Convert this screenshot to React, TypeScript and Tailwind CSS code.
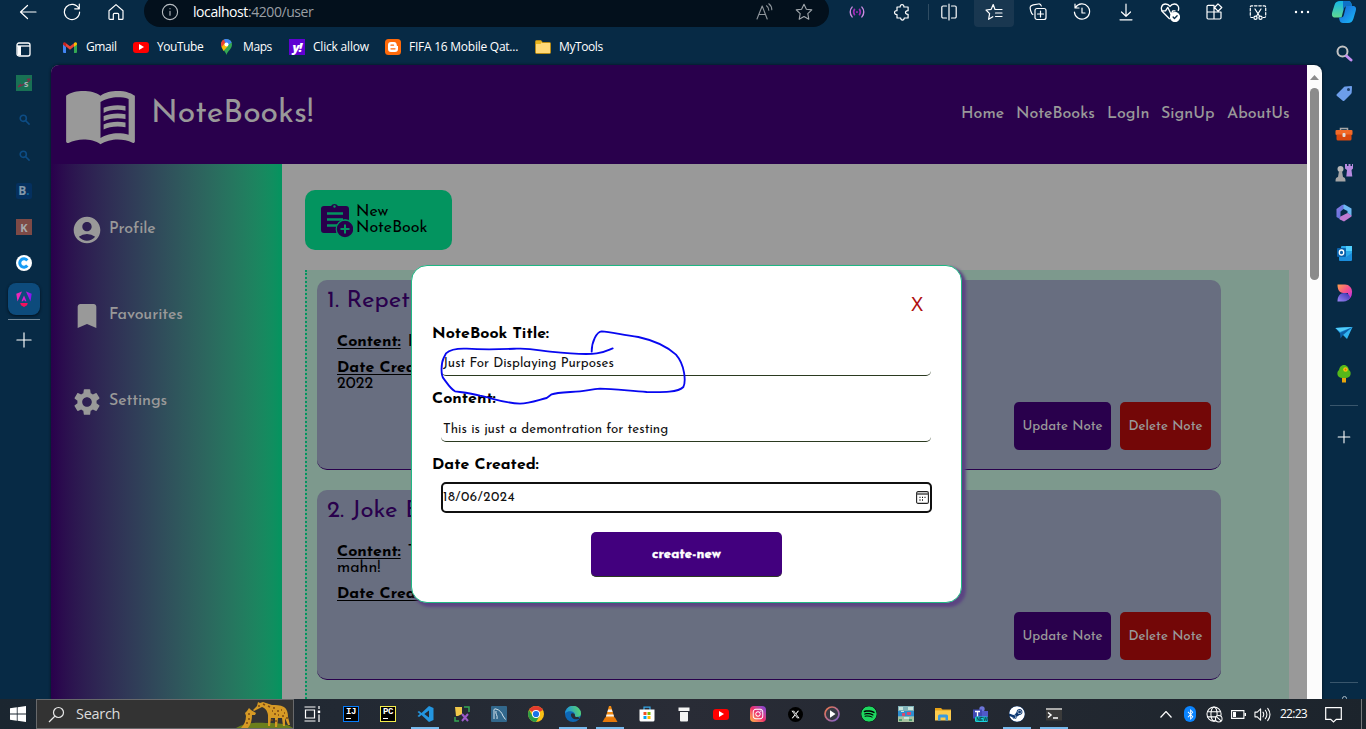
import type { ReactNode } from 'react';
import {
  MdMenuBook,
  MdAccountCircle,
  MdBookmark,
  MdSettings,
} from 'react-icons/md';
import { FaYoutube, FaInstagram, FaSpotify, FaXTwitter, FaSteam, FaBluetoothB } from 'react-icons/fa6';

const JOSEFIN = "font-['Josefin_Sans',Lato,sans-serif]";
const UI = "font-['Segoe_UI','Open_Sans',sans-serif]";

function Line({ children, size = 18, w = 1.2, color = '#fff' }: { children: ReactNode; size?: number; w?: number; color?: string }) {
  return (
    <svg width={size} height={size} viewBox="0 0 18 18" fill="none" stroke={color} strokeWidth={w} strokeLinecap="round" strokeLinejoin="round">
      {children}
    </svg>
  );
}

function Cell({ children, className }: { children: ReactNode; className: string }) {
  return <div className={`flex h-6 shrink-0 items-center justify-center ${className}`}>{children}</div>;
}

function Toolbar() {
  return (
    <div className="flex h-[27px] shrink-0 items-start overflow-hidden">
      <Cell className="ml-[6px] w-11"><Line><path d="M17 9H1.500M8.500 2.500 1.500 9l7 6.500" /></Line></Cell>
      <Cell className="w-11"><Line><path d="M15.800 5.500A7.600 7.600 0 1 0 16.600 9M16.300 1.200v4.600h-4.600" /></Line></Cell>
      <Cell className="w-11"><Line><path d="M2 7.700 9 1.600l7 6.100V15.500a.9.9 0 0 1-.9.9h-3.400v-5a1 1 0 0 0-1-1H7.300a1 1 0 0 0-1 1v5H2.900a.9.9 0 0 1-.9-.9Z" /></Line></Cell>
      <div className="-mt-[5px] ml-[6px] flex h-8 w-[685px] shrink-0 items-center rounded-full bg-[#03101c] pl-[17px]">
        <div className="mt-[2px] flex w-full items-center">
          <Line color="#b9bec3" w={1.1}><circle cx="9" cy="9" r="7.600" /><path d="M9 8.300v4M9 5.500v.300" /></Line>
          <span className={`${UI} ml-[14px] text-[14px] leading-none tracking-[-0.42px] text-white`}>
            localhost<span className="text-[#9a9fa4]">:4200/user</span>
          </span>
          <div className="ml-auto mr-4 flex items-center gap-[22px]">
            <Line color="#8e959b" w={1.1}><path d="M2 16 7.200 3l5 13M3.800 11.500h6.800M11.500 2.800c1.500 1 2.300 2.500 2.300 4.500M13.800.800c2 1.500 3 3.500 3 6" /></Line>
            <Line color="#a2a8ad" w={1.1}><path d="m9 1.200 2.400 5 5.400.7-4 3.800 1 5.500L9 13.500l-4.800 2.700 1-5.500-4-3.800 5.400-.7Z" /></Line>
          </div>
        </div>
      </div>
      <Cell className="ml-[6px] w-11">
        <Line color="#c98be0" w={1.6} size={16}><path d="M3.500 3.500c-2.800 3-2.800 8 0 11M14.500 3.500c2.800 3 2.800 8 0 11" /><path stroke="#a02cb8" strokeWidth="1.900" d="M6.200 6c-1.300 2-1.300 4 0 6M11.800 6c1.300 2 1.300 4 0 6M9 8.800v.4" /></Line>
      </Cell>
      <Cell className="ml-px w-11"><Line><path d="M4 4h3.200c-.3-3.300 4-3.300 3.700 0h4.200v3.700c-3.500-.3-3.500 3.900 0 3.600V15h-3.900c.2 2.700-3.700 2.700-3.500 0H4v-3.500c-3.300.3-3.300-4.200 0-3.900Z" /></Line></Cell>
      <Cell className="w-2"><div className="h-4 w-px bg-[#2f4c62]" /></Cell>
      <Cell className="w-[34px]"><Line><path d="M6.500 3H3a1.200 1.200 0 0 0-1.200 1.200v9.600A1.200 1.200 0 0 0 3 15h3.500M11.500 3H15a1.200 1.200 0 0 1 1.200 1.200v9.600A1.200 1.200 0 0 1 15 15h-3.500M9 1v16" /></Line></Cell>
      <div className="ml-2 h-[27px] w-10 shrink-0 rounded-b bg-[#193750]">
        <Cell className="w-10"><Line><path d="M10 6.500 8.200 1.500 6.200 6.300 1 7l3.600 3.600-1 5.700 4.200-2.600M10.500 6.500h6.500M10.500 10h6.500M10.500 13.500h6.500" /></Line></Cell>
      </div>
      <Cell className="ml-[2px] w-11"><Line><rect x="6" y="5.500" width="11" height="11" rx="2" /><path d="M11.500 8v6M8.500 11h6M3.800 11.500C2 10.500 1 5.500 1.200 4.200 1.500 2.500 3 2 4.200 1.800L9.500 1C11 .8 12 1.500 12.300 3" /></Line></Cell>
      <Cell className="w-11"><Line><path d="M2.500 4.500A7.600 7.600 0 1 1 1.400 9M2 1v4h4M9 5v5h3" /></Line></Cell>
      <Cell className="w-11"><Line><path d="M9 1v12M4.500 9 9 13.300 13.500 9M3 16.800h12" /></Line></Cell>
      <Cell className="w-11">
        <Line size={20}><path d="M8.500 15 2.500 9C0 6 1.500 1.800 5 1.800c2 0 3.200 1 4 2.200.8-1.200 2-2.200 4-2.200 3 0 4.500 3 3.500 5.700M1.500 8h3.500L7 4.800l3 6.500L11.500 8h2" /><circle cx="13.500" cy="13.500" r="4" fill="#fff" /><path stroke="#082b46" d="m11.800 13.500 1.200 1.300 2.400-2.500" /></Line>
      </Cell>
      <Cell className="w-11"><Line><path d="M2 3.500A1.200 1.200 0 0 1 3.200 2.300H9V16H3.200A1.200 1.200 0 0 1 2 14.800ZM2 9h14v5.800a1.200 1.200 0 0 1-1.200 1.200H9M13 .9 16.800 4.500 13 8.200 9.500 4.500Z" /></Line></Cell>
      <Cell className="w-11">
        <Line><path strokeDasharray="2.500 1.800" d="M4 14.500H2.500A1.200 1.200 0 0 1 1.300 13.300V4A1.200 1.200 0 0 1 2.500 2.800h13A1.200 1.200 0 0 1 16.700 4v9.300a1.200 1.200 0 0 1-1.200 1.200H14" /><path d="m6 6 4.700 7.500M12 6l-4.700 7.500" /><circle cx="6.500" cy="14.800" r="1.600" /><circle cx="11.500" cy="14.800" r="1.600" /></Line>
      </Cell>
      <Cell className="w-11"><Line w={2.4}><path d="M3 9h.01M9 9h.01M15 9h.01" /></Line></Cell>
      <Cell className="w-[40px]">
        <svg width="26" height="24" viewBox="0 0 26 24">
          <defs>
            <linearGradient id="cpA" x1="0" y1="0" x2="0" y2="1"><stop offset="0" stopColor="#13b5e8" /><stop offset="1" stopColor="#60d890" /></linearGradient>
            <linearGradient id="cpB" x1="0" y1="0" x2="1" y2="1"><stop offset="0" stopColor="#1b5fd8" /><stop offset="1" stopColor="#18bdf5" /></linearGradient>
          </defs>
          <path d="M12 1h5c2 0 3 1 3.500 3l.5 2h-5c-2 0-2.800 1-3.300 3l-2.200 8.500H4C1 17.500.5 15 1.300 12L3.500 5C4.500 2 6 1 9 1Z" fill="url(#cpA)" />
          <path d="M15 6h7c3 0 3.500 2.500 2.700 5l-2.200 7.500c-1 3-2.500 4.500-5.500 4.500h-5c-2 0-3-1-3.500-3L8 17.500h2c2 0 2.500-1 3-3Z" fill="url(#cpB)" />
          <path d="M12 1h5c2 0 3 1 3.500 3l.5 2h-5c-2 0-2.800 1-3.300 3L12 11Z" fill="#0e71c8" />
        </svg>
      </Cell>
    </div>
  );
}

function Gmail() {
  return (
    <svg width="14" height="11" viewBox="0 0 14 11">
      <path d="M0 1.500V10a1 1 0 0 0 1 1h2V4.500Z" fill="#4285f4" /><path d="M14 1.500V10a1 1 0 0 1-1 1h-2V4.500Z" fill="#34a853" />
      <path d="M3 4.500V1.200L7 4.300l4-3.100v3.300L7 7.700Z" fill="#ea4335" /><path d="M0 1.800C0 .2 1.800-.3 3 .9v4L0 2.600Z" fill="#c5221f" /><path d="M14 1.800C14 .2 12.200-.3 11 .9v4l3-2.300Z" fill="#fbbc04" />
    </svg>
  );
}

function YouTube({ className }: { className: string }) {
  return (
    <span className={`flex items-center justify-center bg-[#f00] ${className}`}>
      <svg width="5" height="6" viewBox="0 0 5 6"><path d="M0 0v6l5-3Z" fill="#fff" /></svg>
    </span>
  );
}

function Bookmarks() {
  return (
    <div className={`${UI} flex h-[38px] shrink-0 items-center pt-[2px] text-[12px] leading-4 text-white`}>
      <div className="ml-[12px] flex w-[70px] items-center gap-[9px]"><Gmail /><span className="tracking-[-0.4px]">Gmail</span></div>
      <div className="flex w-[87px] items-center gap-2"><YouTube className="h-[11px] w-4 rounded-[3px]" /><span className="tracking-[-0.45px]">YouTube</span></div>
      <div className="flex w-[69px] items-center gap-[10px]">
        <svg width="13" height="16" viewBox="0 0 13 16">
          <path d="M6.500 16C5.500 12 1 10 1 5.500a5.500 5.500 0 0 1 11 0C12 10 7.500 12 6.500 16Z" fill="#34a853" />
          <path d="M1.600 8C.2 4.500 1.500 1.500 4 .5L8 4 3.500 9.500Z" fill="#ea4335" /><path d="M4 .5C7-.7 10.500.5 11.600 3.500L8 6 5 3.500Z" fill="#4285f4" /><path d="M1.600 8 5 4l3 3-4.500 5Z" fill="#fbbc04" /><circle cx="6.500" cy="5.500" r="2" fill="#fff" />
        </svg>
        <span className="tracking-[-0.4px]">Maps</span>
      </div>
      <div className="flex w-24 items-center gap-2">
        <span className="flex h-4 w-4 items-center justify-center bg-[#6001d2] text-[13px] font-extrabold italic leading-none tracking-[-1px]">y!</span>
        <span className="tracking-[-0.2px]">Click allow</span>
      </div>
      <div className="flex w-[150px] items-center gap-2">
        <svg width="16" height="16" viewBox="0 0 16 16"><rect width="16" height="16" rx="3.500" fill="#ff6a0a" /><path d="M6 3h3c2 0 2.800 1.500 2.800 3.200 0 .6.3.8 1.200.8v3c0 2-1 3-3 3H6c-2 0-3-1-3-3V6c0-2 1-3 3-3Z" fill="#fff" /><path d="M6 6.200h2.500M6 9.800h4" stroke="#ff6a0a" strokeWidth="1.300" strokeLinecap="round" /></svg>
        <span className="whitespace-nowrap tracking-[-0.25px]">FIFA 16 Mobile Qat...</span>
      </div>
      <div className="flex items-center gap-2">
        <svg width="16" height="14" viewBox="0 0 16 14"><path d="M.5 1.500a1 1 0 0 1 1-1H6L7.500 2.500h7a1 1 0 0 1 1 1v9a1 1 0 0 1-1 1h-13a1 1 0 0 1-1-1Z" fill="#ffd977" stroke="#b88a14" /><path d="M1 1h5l.8 1.500L5.500 4H1Z" fill="#e8b51e" /></svg>
        <span className="tracking-[-0.4px]">MyTools</span>
      </div>
    </div>
  );
}

function RailCell({ children }: { children: ReactNode }) {
  return <div className="flex h-9 w-12 shrink-0 items-center justify-center">{children}</div>;
}

function FaintSearch() {
  return <Line size={11} color="#0d4c84" w={2.6}><circle cx="7" cy="7" r="5" /><path d="m11 11 5.500 5.500" /></Line>;
}

function LeftRail() {
  return (
    <div className={`${UI} flex w-[51px] shrink-0 flex-col`}>
      <div className="flex h-[38px] w-[46px] shrink-0 items-center justify-center pt-[6px]">
        <svg width="15" height="15" viewBox="0 0 15 15"><rect x="1" y="1" width="13" height="13" rx="2" fill="none" stroke="#fff" strokeWidth="1.300" /><path d="M1 4h13" stroke="#fff" strokeWidth="1.300" /><path d="M1.500 4h3.500v9.500H1.500Z" fill="#fff" /></svg>
      </div>
      <RailCell>
        <svg width="16" height="16" viewBox="0 0 16 16"><rect width="16" height="16" fill="#197154" /><path d="M2 12c3-1 11-5 12.500-8M2 12l3-3M14 4l-3 .5" stroke="#7c2f4a" strokeWidth="1.300" fill="none" /><text x="8" y="12" fontSize="9" fontWeight="700" fill="#9fb5b3" fontFamily="Open Sans">s</text></svg>
      </RailCell>
      <RailCell><FaintSearch /></RailCell>
      <RailCell><FaintSearch /></RailCell>
      <RailCell><span className="flex h-4 w-4 items-center justify-center rounded-[2px] bg-[#04305f] text-[12px] font-bold leading-none text-[#8398aa]">B<span className="text-[#08689c]">.</span></span></RailCell>
      <RailCell><span className="flex h-4 w-4 items-center justify-center bg-[#7d4a46] text-[11px] font-bold leading-none text-[#a5a9ad]">K</span></RailCell>
      <RailCell>
        <svg width="16" height="16" viewBox="0 0 16 16"><circle cx="8" cy="8" r="8" fill="#fff" /><path d="M11.300 5.500A4.200 4.200 0 1 0 11.300 10.500" fill="none" stroke="#179cf5" strokeWidth="3" /></svg>
      </RailCell>
      <RailCell>
        <span className="flex h-8 w-8 items-center justify-center rounded-lg bg-[#0d4b7c] shadow-[0_1px_3px_#03101c]">
          <svg width="16" height="16" viewBox="0 0 16 16">
            <defs><linearGradient id="ng" x1="0" y1="0" x2="1" y2="0"><stop offset="0" stopColor="#f52bb0" /><stop offset=".5" stopColor="#e01bd0" /><stop offset="1" stopColor="#7a16f5" /></linearGradient></defs>
            <path d="M6 .5 1.500 10.500.3 2.800ZM10 .5l4.500 10 1.200-7.700ZM8 4.500l2.500 5.800h-1.500L8 8.500l-1 1.800H5.500Z" fill="url(#ng)" />
            <path d="M4.200 12h7.600l-.8 2.200L8 16l-3-1.800Z" fill="#f5115c" />
          </svg>
        </span>
      </RailCell>
      <div className="ml-2 mt-[2px] h-px w-8 bg-[#74899a]" />
      <div className="flex h-10 w-[47px] items-center justify-center"><Line size={16} w={1.3}><path d="M9 1v16M1 9h16" /></Line></div>
    </div>
  );
}

function RightRail() {
  const cell = 'flex h-10 w-full shrink-0 items-center justify-center';
  return (
    <div className="flex w-11 shrink-0 flex-col overflow-hidden pt-[6px]">
      <div className={cell}><svg width="17" height="17" viewBox="0 0 17 17"><circle cx="6.500" cy="6.500" r="5" fill="none" stroke="#c3c3c3" strokeWidth="2" /><path d="m10.500 11 4.500 4" stroke="#c38ef0" strokeWidth="3" strokeLinecap="round" /></svg></div>
      <div className={cell}><svg width="17" height="17" viewBox="0 0 17 17"><path d="M9.500 1.500 15 1c.7 0 1 .3 1 1l-.3 5.500c0 .5-.2 1-.7 1.500l-6.500 6.500c-.7.7-1.300.7-2 0L1 11c-.7-.7-.7-1.300 0-2l7-7c.5-.4 1-.5 1.500-.5Z" fill="#6d9eea" /><circle cx="12.500" cy="4.500" r="1.500" fill="#1c3c66" /></svg></div>
      <div className={cell}><svg className="mt-px" width="18" height="16" viewBox="0 0 18 16"><path d="M5.500 5V2.500h7V5" fill="none" stroke="#a8a8a8" strokeWidth="1.500" /><rect x=".5" y="4" width="17" height="5" rx="1" fill="#f26a28" /><path d="M1.500 8.500h15V13a1.500 1.500 0 0 1-1.500 1.500H3A1.500 1.500 0 0 1 1.500 13Z" fill="#d9480f" /><rect x="7.500" y="7" width="3" height="4" rx="1" fill="#ddd" /></svg></div>
      <div className={cell}><svg width="18" height="18" viewBox="0 0 18 18"><path d="M10 0h2v2h1.500V0h2v2H17V0h1v4.500L16.500 6l.8 6.500h-6L12 6l-2-1.500Z" fill="#b78ae0" /><circle cx="5.500" cy="5" r="3" fill="#b8b8b8" /><path d="M4 7h3l1 6c2 .5 2.500 1.500 2.500 4.500H.5c0-3 .5-4 2.500-4.500Z" fill="#a5a5a5" /></svg></div>
      <div className={cell}>
        <svg width="18" height="18" viewBox="0 0 18 18"><defs><linearGradient id="m3" x1="0" y1="0" x2="1" y2="1"><stop offset="0" stopColor="#8f7ae8" /><stop offset="1" stopColor="#4a6fd0" /></linearGradient></defs>
          <path d="M7 1 9.500.5 16.500 4.500V12l-4-3V7L7.500 4.500Z" fill="#6cb8f2" /><path d="M7 1 1.500 5v8l5 3 2-1-3-2.500V7.500L8.500 5V1Z" fill="url(#m3)" /><path d="m5.500 12.500 7-3.500 4 2.500v1L9 17.500l-4.500-2.300Z" fill="#c07ad0" /></svg>
      </div>
      <div className={cell}><svg width="17" height="17" viewBox="0 0 17 17"><rect x="5" y="1" width="11" height="14" rx="1" fill="#28a8ea" /><path d="M3 9l7 3 6-4v7a1 1 0 0 1-1 1H4a1 1 0 0 1-1-1Z" fill="#1a8ddc" /><path d="M10 1h6v5h-6Z" fill="#50d0ff" /><rect x="1" y="3" width="9" height="9" rx="1" fill="#0a62ac" /><ellipse cx="5.500" cy="7.500" rx="2.200" ry="2.500" fill="none" stroke="#fff" strokeWidth="1.300" /></svg></div>
      <div className={cell}>
        <svg width="17" height="18" viewBox="0 0 17 18"><defs><linearGradient id="dz" x1="0" y1="0" x2="1" y2="1"><stop offset="0" stopColor="#ffa04a" /><stop offset=".5" stopColor="#f5508e" /><stop offset="1" stopColor="#b32cf5" /></linearGradient><linearGradient id="dy" x1="0" y1="1" x2="1" y2="0"><stop offset="0" stopColor="#9b86f5" /><stop offset="1" stopColor="#3a2fae" /></linearGradient></defs>
          <path d="M1.500.5H9a7 7 0 0 1 7 8c0 4-2 6-4 7.500V9H7.500C3 9 1.500 5 1.500.5Z" fill="url(#dz)" /><path d="M1.500 17.500C1.500 12 4 9 8 9s5.500 2 6 4.500c-1.500 2.500-3.500 4-6.500 4Z" fill="url(#dy)" /></svg>
      </div>
      <div className={cell}><svg width="18" height="14" viewBox="0 0 18 14"><path d="M.5 2 17.500 1 12 13 8 9Z" fill="#30b3f2" /><path d="m.5 2 17-1L6 8.500Z" fill="#1684d2" /><path d="M5 7 17.500 1 8 9l-2.500 3.500Z" fill="#0c5fa8" /><path d="M.5 2 17.500 1 5 6Z" fill="#51cdf8" /></svg></div>
      <div className={cell}><svg className="mt-[2px]" width="16" height="18" viewBox="0 0 16 18"><path d="M6 11h4v6.500H6Z" fill="#e9a50c" /><path d="M8 0c3 0 4.500 2.500 5 5 2 1.500 2 4 1 6-1 1.700-4 2-6 2s-5-.3-6-2c-1-2-1-4.500 1-6 .5-2.500 2-5 5-5Z" fill="#55b81a" /><circle cx="9.500" cy="4.500" r="2.300" fill="#f2c811" /><circle cx="9.500" cy="4.500" r=".9" fill="#f0620c" /></svg></div>
      <div className="ml-2 mt-3 h-px w-7 shrink-0 bg-[#39566c]" />
      <div className="mt-6 flex w-[43px] justify-center"><Line size={14} w={1.4}><path d="M9 1.500v15M1.500 9h15" /></Line></div>
      <div className="ml-2 mt-[238px] h-px w-7 shrink-0 bg-[#39566c]" />
      <div className="ml-5 mt-[13px] h-2 w-[5px] shrink-0 rounded-full border border-[#a9b7c2]" />
    </div>
  );
}

function Header() {
  return (
    <header className={`${JOSEFIN} flex h-[99px] shrink-0 items-center bg-[#29004c] text-[#999]`}>
      <MdMenuBook className="ml-[12px] h-[75px] w-[75px]" />
      <span className="ml-[13px] -mt-[2px] text-[32px] leading-none">NoteBooks!</span>
      <nav className="ml-auto mr-[18px] mt-[-1px] flex gap-[13px] text-[16px] font-medium leading-none">
        <span className="w-[42px]">Home</span>
        <span className="w-[78px]">NoteBooks</span>
        <span className="w-[41px]">LogIn</span>
        <span className="w-[53px]">SignUp</span>
        <span className="w-[62px]">AboutUs</span>
      </nav>
    </header>
  );
}

function Sidebar() {
  return (
    <aside className={`${JOSEFIN} flex w-[231px] shrink-0 flex-col bg-linear-to-r from-[#29004c] to-[#03945f] pt-[23px] text-[16px] font-medium leading-none text-[#999]`}>
      <div className="flex h-[86px] items-center"><MdAccountCircle className="ml-5 h-8 w-8" /><span className="ml-[6px] -mt-[2px] tracking-[-0.1px]">Profile</span></div>
      <div className="flex h-[86px] items-center"><MdBookmark className="ml-5 h-8 w-8" /><span className="ml-[6px] -mt-[2px] tracking-[-0.1px]">Favourites</span></div>
      <div className="flex h-[86px] items-center"><MdSettings className="ml-5 h-8 w-8" /><span className="ml-[6px] -mt-[2px] tracking-[-0.1px]">Settings</span></div>
    </aside>
  );
}

function NoteCard({ title, body }: { title: string; body: ReactNode }) {
  return (
    <article className="flex h-[190px] w-[904px] shrink-0 flex-col rounded-[10px] border-b border-[#29004c] bg-[#686e80] px-[10px] pt-[9px]">
      <h2 className="h-[25px] whitespace-nowrap text-[24px] leading-[25px] text-[#29004c]">{title}</h2>
      <div className="ml-[10px] mt-5 h-[68px] text-[16px] leading-4 text-black">{body}</div>
      <div className="flex justify-end gap-[9px] text-[13.333px] font-medium leading-none text-[#999]">
        <div className="flex h-12 w-[97px] items-center justify-center rounded-[5px] bg-[#29004c] pt-px">Update Note</div>
        <div className="flex h-12 w-[91px] items-center justify-center rounded-[5px] bg-[#730707] pt-px">Delete Note</div>
      </div>
    </article>
  );
}

function Main() {
  return (
    <main className={`${JOSEFIN} flex flex-1 flex-col pl-[23px] pt-[26px]`}>
      <div className="flex h-[60px] w-[147px] shrink-0 items-center rounded-[10px] bg-[#03945f] pl-[15px]">
        <svg width="33" height="36" viewBox="0 0 33 36" fill="#29004c">
          <path d="M4 4h7a4 4 0 0 1 7 0h8a3 3 0 0 1 3 3v11a9 9 0 0 0-11 13H4a3 3 0 0 1-3-3V7a3 3 0 0 1 3-3Z" />
          <path d="M7 11.500h16M7 17.500h16M7 23.500h10" stroke="#03945f" strokeWidth="2.600" /><circle cx="14.500" cy="4.500" r="1.200" fill="#03945f" />
          <circle cx="25" cy="27" r="8.800" stroke="#03945f" strokeWidth="1.200" /><path d="M25 22.500v9M20.500 27h9" stroke="#03945f" strokeWidth="2" />
        </svg>
        <span className="ml-[3px] text-[16px] leading-4 text-black">New<br />NoteBook</span>
      </div>
      <section className="mt-5 flex h-[429px] w-[984px] flex-col gap-5 overflow-hidden border-l-2 border-dotted border-[#03945f] bg-[#7d998d] pl-[10px] pt-[10px]">
        <NoteCard title="1. Repet" body={<>
          <p><b className="underline underline-offset-2">Content:</b><span className="ml-[7px]">I</span></p>
          <p className="mt-[10px]"><b className="underline underline-offset-2">Date Created:</b><br />2022</p>
        </>} />
        <NoteCard title="2. Joke B" body={<>
          <p><b className="underline underline-offset-2">Content:</b><span className="ml-[7px]">T</span><br />mahn!</p>
          <p className="mt-[10px]"><b className="underline underline-offset-2">Date Created:</b></p>
        </>} />
      </section>
    </main>
  );
}

function Modal() {
  const field = 'ml-2 flex w-[490px] shrink-0 items-center text-[13.333px] leading-none text-[#111]';
  return (
    <div className={`${JOSEFIN} absolute left-[360px] top-[200px] flex h-[338px] w-[551px] flex-col rounded-[16px] border border-[#1fb884] bg-white pl-5 pr-[21px] pt-7 text-black shadow-[3px_3px_3px_1px_#5b4482]`}>
      <div className="mr-[17px] flex h-5 shrink-0 items-center justify-end font-['Noto_Sans'] text-[20px] leading-none text-[#b00f0f]">X</div>
      <div className="mt-3 h-4 text-[16px] font-bold leading-4">NoteBook Title:</div>
      <div className={`${field} ml-[9px] mt-[7px] h-[27px] rounded-[5px] border-b border-[#2b3a20] pl-[2px] pt-[3px]`}>Just For Displaying Purposes</div>
      <div className="mt-[15px] h-4 text-[16px] font-bold leading-4">Content:</div>
      <div className={`${field} ml-[9px] mt-2 h-[27px] rounded-[5px] border-b border-[#2b3a20] pl-[2px] pt-[3px]`}>This is just a demontration for testing</div>
      <div className="mt-[15px] h-4 text-[16px] font-bold leading-4">Date Created:</div>
      <div className={`${field} ml-[9px] mt-[9px] h-[31px] w-[491px] justify-between rounded-[5px] border-2 border-[#101010] pr-px`}>
        <span className="tracking-[0.5px]">18/06/2024</span>
        <svg width="13" height="13" viewBox="0 0 13 13"><rect x=".6" y=".6" width="11.800" height="11.800" rx="1.500" fill="none" stroke="#222" strokeWidth="1.100" /><path d="M.6 3h11.800" stroke="#555" strokeWidth="1.600" /><path d="M3.500 6.300h1M6 6.300h1M8.500 6.300h1M3.500 9h1M6 9h1" stroke="#111" strokeWidth="1.300" /></svg>
      </div>
      <div className="ml-[159px] mt-[19px] flex h-[45px] w-[191px] shrink-0 items-center justify-center rounded-[5px] border-b border-[#2b3a20] bg-[#42007e] pt-px text-[13.333px] font-black leading-none tracking-[0.1px] text-white [-webkit-text-stroke:0.4px_white]">create-new</div>
    </div>
  );
}

function Scribble() {
  return (
    <svg className="absolute left-[349px] top-[190px]" width="300" height="200" viewBox="0 0 900 600" fill="none" stroke="#0808f0" strokeWidth="5.500" strokeLinecap="round" strokeLinejoin="round">
      <path d="M575 290C575 260 590 230 605 229C630 230 660 238 715 246C770 258 805 278 828 299C855 330 858 380 850 396C835 412 790 412 740 411C690 408 640 401 600 401C575 402 560 408 540 409C500 412 470 412 455 418L440 429C400 440 385 446 360 446C310 444 280 430 240 422C210 414 185 412 165 409C150 400 142 385 131 371C122 360 123 325 131 309L138 295C150 284 175 280 200 281C260 285 300 283 350 281C400 279 420 288 450 290C500 295 560 300 590 295C615 292 625 285 638 280" />
    </svg>
  );
}

function Page() {
  return (
    <div className="relative flex h-[634px] w-[1256px] shrink-0 flex-col bg-[#999]">
      <Header />
      <div className="flex flex-1"><Sidebar /><Main /></div>
      <Modal />
      <Scribble />
    </div>
  );
}

function Scrollbar() {
  return (
    <div className="flex w-[15px] flex-col items-center bg-[#fcfcfc] pt-[10px]">
      <svg width="9" height="5" viewBox="0 0 9 5"><path d="M0 5 4.500 0 9 5Z" fill="#8b8b8b" /></svg>
      <div className="mt-2 h-[192px] w-[9px] rounded-full bg-[#8b8b8b]" />
    </div>
  );
}

function Giraffes() {
  return (
    <svg width="57" height="28" viewBox="0 0 57 28">
      <path d="M0 28c8-5 20-6 30-5 14 0 22 1 27 5Z" fill="#6b7f1c" />
      <path d="M5 28c3-3 5-7 5-12l-1-3 2-2 2-3 2 2 5 3-1 2-3 0c0 5-1 9-4 13Z" fill="#d69a25" />
      <path d="M17 10l4-4 1-4 2 1 3-1 9 3c4 0 8 0 12 2 3 2 4 6 4 10l2 8h-2l-3-7 0 8h-2l-1-8-4 0-1 9h-2v-9l-4 0-1 8h-2l0-11c-1-5-3-7-6-8l-4 2-4 2Z" fill="#d69a25" />
      <path d="M27 4l2 1M32 6l2 1M37 8h2M41 11h2M38 14h2M45 10h1M48 13h1M46 16h2M36 11h1M42 15h1M51 17v2M40 20v2M36 19v2M12 14h2M12 19h2M10 23h2M22 6h2" stroke="#7d4a13" strokeWidth="1.500" />
    </svg>
  );
}

function Task({ children, active }: { children: ReactNode; active?: boolean }) {
  return (
    <div className="flex h-[30px] w-[37px] shrink-0 flex-col items-center">
      <div className="flex h-7 items-center pt-[2px]">{children}</div>
      {active && <div className="h-[2px] w-7 bg-[#76b9ed]" />}
    </div>
  );
}

function Ide({ label, className }: { label: string; className: string }) {
  return (
    <span className={`flex h-4 w-4 flex-col items-start border bg-black pl-[2px] pt-px ${className}`}>
      <span className="font-['Liberation_Mono',monospace] text-[9px] font-bold leading-[9px] tracking-[-0.3px] text-white">{label}</span>
      <span className="mt-px h-px w-[5px] bg-white" />
    </span>
  );
}

function Taskbar() {
  return (
    <div className={`${UI} flex h-[30px] shrink-0 bg-linear-to-r from-[#1b2630] via-[#292c36] to-[#1c242c] text-white`}>
      <div className="flex w-9 items-center justify-center">
        <svg width="16" height="16" viewBox="0 0 16 16" fill="#fff"><path d="M0 2.200 6.800 1.300v6.300H0ZM7.600 1.200 16 0v7.600H7.600ZM0 8.400h6.800v6.300L0 13.800ZM7.600 8.400H16V16l-8.400-1.200Z" /></svg>
      </div>
      <div className="flex w-[258px] items-center border border-[#68696b] bg-[#333]">
        <svg className="ml-[11px]" width="17" height="17" viewBox="0 0 17 17" fill="none" stroke="#e8e8e8" strokeWidth="1.200"><circle cx="10.500" cy="6.500" r="5" /><path d="M6.800 10.300 1 16" /></svg>
        <span className="ml-[11px] mt-px text-[14.500px] leading-none tracking-[-0.3px] text-[#dcdcdc]">Search</span>
        <span className="ml-auto"><Giraffes /></span>
      </div>
      <div className="mr-[1.500px] flex"><Task><svg width="17" height="16" viewBox="0 0 17 16" fill="none" stroke="#fff" strokeWidth="1.200"><path d="M.5 1h11M.5 15h11M1.500 4h9v8h-9ZM15 0v3M15 8.500V16" /><path d="M13.800 5.800h2.400" strokeWidth="2.500" /></svg></Task></div>
      <Task><Ide label="IJ" className="border-[#087cfa]" /></Task>
      <Task><Ide label="PC" className="border-[#f5ee4c]" /></Task>
      <Task active><svg width="17" height="16" viewBox="0 0 17 16"><path d="M12 0 16.500 2v12L12 16 4.500 9 2 11 .5 10 3 8 .5 6 2 5l2.500 2ZM12 4.500 7.300 8l4.700 3.500Z" fill="#2396e0" fillRule="evenodd" /></svg></Task>
      <Task><svg width="16" height="16" viewBox="0 0 16 16"><path d="M1 1h7v7l-4 2H2Z" fill="#f2c94a" /><path d="M10 1h5v5M1 11v4h4" fill="none" stroke="#36a853" strokeWidth="1.500" /><path d="m8 8 6 7M14 8l-6 7" stroke="#9c5ac8" strokeWidth="2" /></svg></Task>
      <Task><svg width="16" height="16" viewBox="0 0 16 16"><rect width="16" height="16" rx="1" fill="#32688c" /><path d="M3 13V5C2.500 3.500 3.500 2.500 5 3c4 1 6 4 7 7l2.500 3.500M5 5c-1 3 2 4 1 8" fill="none" stroke="#d4e3ec" strokeWidth="1" /></svg></Task>
      <Task><svg width="16" height="16" viewBox="0 0 16 16"><circle cx="8" cy="8" r="8" fill="#fbc116" /><path d="M8 8 1.100 4A8 8 0 0 1 14.900 4Z" fill="#e33b2e" /><path d="M8 8H8L4.600 10 1.100 4A8 8 0 0 0 8 16l3.500-6Z" fill="#2a9d48" /><circle cx="8" cy="8" r="4" fill="#fff" /><circle cx="8" cy="8" r="3.100" fill="#1a73e8" /></svg></Task>
      <Task active>
        <svg width="16" height="16" viewBox="0 0 16 16"><defs><linearGradient id="ed" x1="0" y1=".5" x2="1" y2=".3"><stop offset="0" stopColor="#1a8ee0" /><stop offset="1" stopColor="#5bd86b" /></linearGradient></defs>
          <circle cx="8" cy="8" r="8" fill="#0d67b5" /><path d="M0 8a8 8 0 0 1 16-.5c0 3-2.500 3.800-4.500 3.500-2 0-2-1-1.500-1.500C10.500 6 6 4.500 3 5.500 1 6.300 0 7.500 0 8Z" fill="url(#ed)" /><path d="M6 8c-.5 4 3 6 7.500 5l1-.5-1.500-1.700c-2 .7-3.500-.3-3-1.300C10 7.500 7 6.500 6 8Z" fill="#292c36" /></svg>
      </Task>
      <Task active><svg width="16" height="16" viewBox="0 0 16 16"><path d="M7 0h2l3.500 12h-9Z" fill="#f28a12" /><path d="M6.200 3.500h3.600l.8 2.500H5.400ZM4.600 8.500h6.800l.6 2H4Z" fill="#f4f4f4" /><path d="M3 11.500h10L15.500 16H.5Z" fill="#e87808" /></svg></Task>
      <Task><svg width="16" height="16" viewBox="0 0 16 16"><path d="M5 4V1.200h6V4" fill="none" stroke="#35a7e8" strokeWidth="1.200" /><path d="M.5 3.500h15V14a1.500 1.500 0 0 1-1.500 1.500H2A1.500 1.500 0 0 1 .5 14Z" fill="#fff" /><path d="M4.500 6h3v3h-3Z" fill="#f25022" /><path d="M8.500 6h3v3h-3Z" fill="#7fba00" /><path d="M4.500 10h3v3h-3Z" fill="#00a4ef" /><path d="M8.500 10h3v3h-3Z" fill="#ffb900" /></svg></Task>
      <Task><svg width="12" height="15" viewBox="0 0 12 15" fill="#f4f4f4"><path d="M.5.5h11V4H.5ZM2 5h8v8.500a1 1 0 0 1-1 1H3a1 1 0 0 1-1-1Z" /></svg></Task>
      <Task><YouTube className="h-[11px] w-4 rounded-[3px]" /></Task>
      <Task><span className="flex h-4 w-4 items-center justify-center rounded-[4px] bg-linear-to-tr from-[#fdb23a] via-[#ee2a6b] to-[#7a3ae0]"><FaInstagram className="h-3 w-3" /></span></Task>
      <Task><span className="flex h-[15px] w-[15px] items-center justify-center rounded-full bg-black"><FaXTwitter className="h-[9px] w-[9px]" /></span></Task>
      <Task>
        <svg width="16" height="16" viewBox="0 0 16 16"><defs><linearGradient id="mp" x1="0" y1="0" x2="1" y2="1"><stop offset="0" stopColor="#f0784a" /><stop offset="1" stopColor="#7d60d0" /></linearGradient></defs><circle cx="8" cy="8" r="7" fill="#363a44" stroke="url(#mp)" strokeWidth="1.700" /><path d="M6 4.300v7.400L11.500 8Z" fill="#fff" /></svg>
      </Task>
      <Task><FaSpotify className="h-4 w-4 rounded-full bg-black text-[#1ed760]" /></Task>
      <Task><svg width="16" height="16" viewBox="0 0 16 16"><path d="M0 0h16v16H0Z" fill="#7fb1b8" /><path d="M0 5h16v5H0Z" fill="#2d8fd0" /><path d="M0 11h16v5H0Z" fill="#a8c2a0" /><path d="M4 7h3v3H4ZM9 6h4v3H9Z" fill="#d64a70" /><path d="M1 1h4v3H1ZM10 1h5v3h-5ZM3 5h3v1H3ZM6 11h5v2H6Z" fill="#c8e4dc" /><path d="M1 13h3v2H1ZM11 13h3v2h-3Z" fill="#4e9a70" /></svg></Task>
      <Task><svg width="16" height="14" viewBox="0 0 16 14"><path d="M0 1h6l1.500 1.500H16V12H0Z" fill="#e8a317" /><path d="M0 3.500h16V13.500H0Z" fill="#fccb4e" /><path d="M3 13.500V9a1.500 1.500 0 0 1 1.500-1.500h7A1.500 1.500 0 0 1 13 9v4.500h-2.500V10.500h-5v3Z" fill="#3a9ae0" /></svg></Task>
      <Task><svg width="17" height="16" viewBox="0 0 17 16"><circle cx="10" cy="3" r="2.700" fill="#6d75d8" /><path d="M6 5h10v6H6Z" fill="#5059c9" /><rect x="1" y="3.500" width="9" height="9" fill="#4048b4" /><path d="M3 5.500h5M5.500 5.500v5" stroke="#fff" strokeWidth="1.300" /><rect x="3" y="10.500" width="13" height="5.500" rx="1.500" fill="#1bd3dd" /><text x="4.500" y="15.200" fontSize="5" fontWeight="800" fill="#083638" fontFamily="Liberation Sans">NEW</text></svg></Task>
      <Task active><FaSteam className="h-4 w-4 rounded-full bg-[#0e3974] text-[#fff]" /></Task>
      <Task active><svg width="16" height="14" viewBox="0 0 16 14"><path d="M0 1h16v12.500H0Z" fill="#3b3b3b" /><path d="M0 1h16v2H0Z" fill="#aaa" /><path d="m2 5.500 3 2.500-3 2.500M7 11h5" fill="none" stroke="#fff" strokeWidth="1.500" /></svg></Task>
      <div className="ml-auto flex items-center">
        <div className="flex w-6 justify-center"><svg width="12" height="7" viewBox="0 0 12 7"><path d="m.5 6.500 5.500-6 5.500 6" fill="none" stroke="#fff" strokeWidth="1.200" /></svg></div>
        <div className="flex w-6 justify-center"><span className="flex h-4 w-3 items-center justify-center rounded-full bg-[#0a84ff]"><FaBluetoothB className="h-[11px] w-[9px]" /></span></div>
        <div className="flex w-6 justify-center"><Line size={17} w={1.1}><circle cx="8.500" cy="8.500" r="7.500" /><ellipse cx="8.500" cy="8.500" rx="3.300" ry="7.500" /><path d="M1.500 6h14M1.500 11.500h9" /><circle cx="13.500" cy="13.500" r="3.500" fill="#20272f" /><path d="m11.200 11.500 4.500 4" /></Line></div>
        <div className="flex w-6 justify-center"><svg width="15" height="9" viewBox="0 0 15 9"><path d="M.6.6h12.300v7.800H.6Z" fill="none" stroke="#fff" strokeWidth="1.100" /><path d="M2 2h3v5H2ZM13.500 3H15v3h-1.500Z" fill="#fff" /></svg></div>
        <div className="flex w-6 justify-center"><Line size={17} w={1.1}><path d="M1 6.500h2.500L7 3v12l-3.500-3.500H1ZM9.500 6.500c1 1.500 1 3.500 0 5M12 4.500c2 2.700 2 6.300 0 9M14.500 2.500c3 4 3 9 0 13" /></Line></div>
        <span className="ml-[6px] w-[29px] whitespace-nowrap text-[12px] leading-none tracking-[-0.75px]">22:23</span>
        <div className="ml-4 mr-[19px] mt-[2px]"><svg width="17" height="16" viewBox="0 0 17 16"><path d="M.7.7h15.600v11.600h-5L8.500 15l-2.800-2.700h-5Z" fill="none" stroke="#fff" strokeWidth="1.200" /></svg></div>
      </div>
      <div className="mr-1 h-full w-px bg-[#77797c]" />
    </div>
  );
}

export default function App() {
  return (
    <div className="flex h-[729px] w-[1366px] flex-col overflow-hidden bg-[#072a45]">
      <Toolbar />
      <div className="flex h-[672px] shrink-0">
        <LeftRail />
        <div className="flex w-[1271px] shrink-0 flex-col">
          <Bookmarks />
          <div className="flex h-[634px] shrink-0 overflow-hidden rounded-t-[8px] shadow-[0_0_3px_#03101c]">
            <Page />
            <Scrollbar />
          </div>
        </div>
        <RightRail />
      </div>
      <Taskbar />
    </div>
  );
}
